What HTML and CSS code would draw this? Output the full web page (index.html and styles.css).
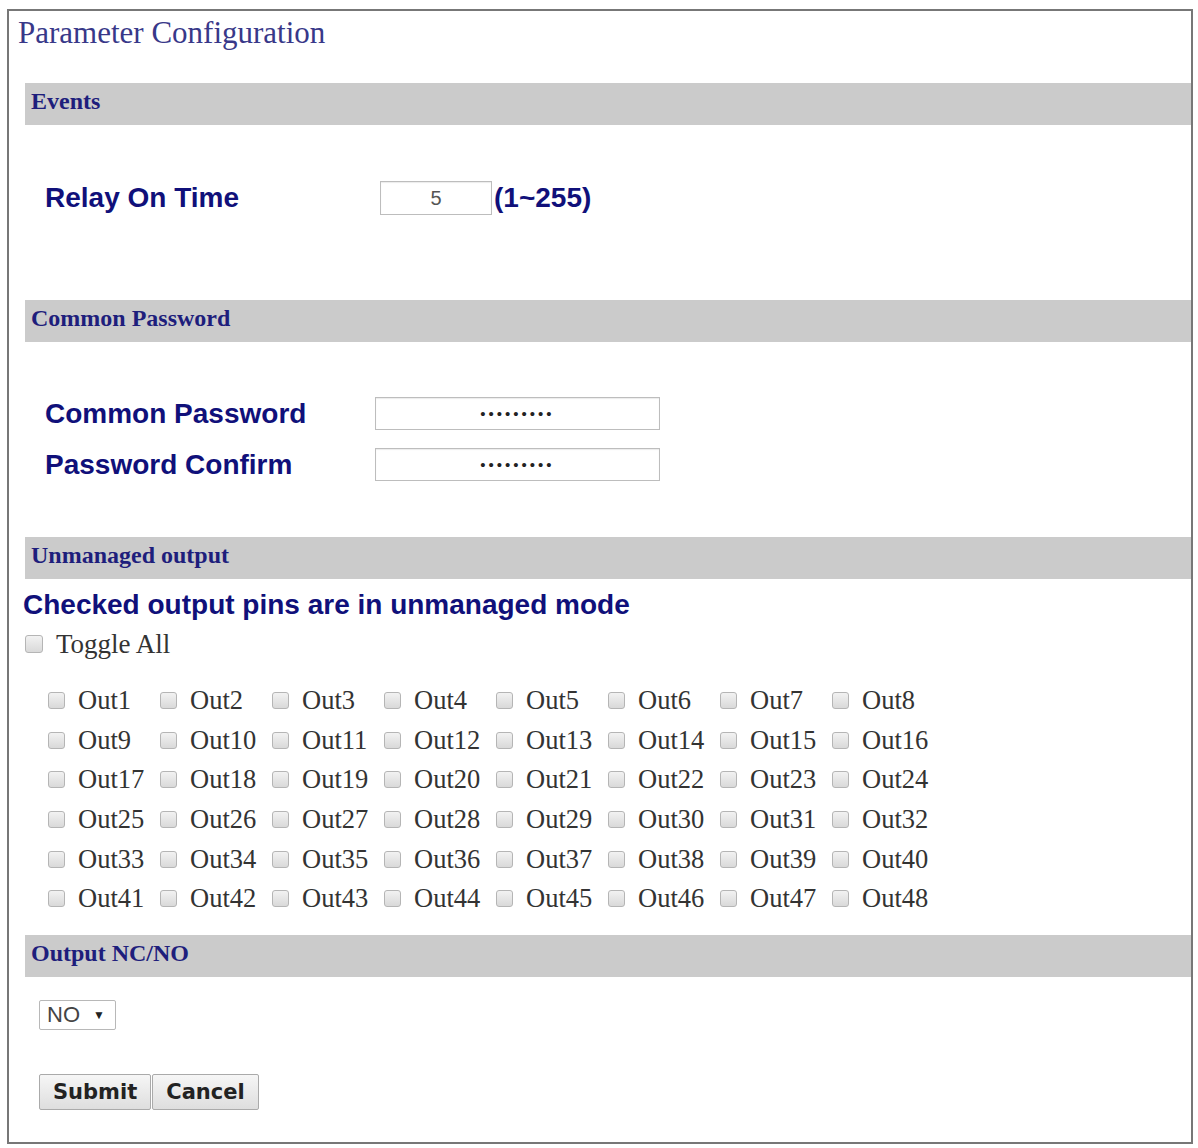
FILE: index.html
```html
<!DOCTYPE html>
<html lang="en">
<head>
  <meta charset="UTF-8" />
  <title>Parameter Configuration</title>
  <link rel="stylesheet" href="styles.css">
</head>
<body>
  <div class="page">
    <h1 class="title">Parameter Configuration</h1>

    <div class="bar">Events</div>
    <div class="section relay">
      <div class="row">
        <label class="label relay-label" for="relayTime">Relay On Time</label>
        <input class="field small" type="text" id="relayTime" value="5" />
        <span class="range">(1~255)</span>
      </div>
    </div>

    <div class="bar">Common Password</div>
    <div class="section passwords">
      <div class="row">
        <label class="label" for="pwd">Common Password</label>
        <input class="field wide" type="password" id="pwd" value="123456789" />
      </div>
      <div class="row">
        <label class="label" for="pwd2">Password Confirm</label>
        <input class="field wide" type="password" id="pwd2" value="123456789" />
      </div>
    </div>

    <div class="bar">Unmanaged output</div>
    <div class="section unmanaged">
      <p class="note">Checked output pins are in unmanaged mode</p>
      <label class="toggle"><input type="checkbox" class="box" /> Toggle All</label>
      <div class="outs">
        <label><input type="checkbox" class="box" />Out1</label>
        <label><input type="checkbox" class="box" />Out2</label>
        <label><input type="checkbox" class="box" />Out3</label>
        <label><input type="checkbox" class="box" />Out4</label>
        <label><input type="checkbox" class="box" />Out5</label>
        <label><input type="checkbox" class="box" />Out6</label>
        <label><input type="checkbox" class="box" />Out7</label>
        <label><input type="checkbox" class="box" />Out8</label>
        <label><input type="checkbox" class="box" />Out9</label>
        <label><input type="checkbox" class="box" />Out10</label>
        <label><input type="checkbox" class="box" />Out11</label>
        <label><input type="checkbox" class="box" />Out12</label>
        <label><input type="checkbox" class="box" />Out13</label>
        <label><input type="checkbox" class="box" />Out14</label>
        <label><input type="checkbox" class="box" />Out15</label>
        <label><input type="checkbox" class="box" />Out16</label>
        <label><input type="checkbox" class="box" />Out17</label>
        <label><input type="checkbox" class="box" />Out18</label>
        <label><input type="checkbox" class="box" />Out19</label>
        <label><input type="checkbox" class="box" />Out20</label>
        <label><input type="checkbox" class="box" />Out21</label>
        <label><input type="checkbox" class="box" />Out22</label>
        <label><input type="checkbox" class="box" />Out23</label>
        <label><input type="checkbox" class="box" />Out24</label>
        <label><input type="checkbox" class="box" />Out25</label>
        <label><input type="checkbox" class="box" />Out26</label>
        <label><input type="checkbox" class="box" />Out27</label>
        <label><input type="checkbox" class="box" />Out28</label>
        <label><input type="checkbox" class="box" />Out29</label>
        <label><input type="checkbox" class="box" />Out30</label>
        <label><input type="checkbox" class="box" />Out31</label>
        <label><input type="checkbox" class="box" />Out32</label>
        <label><input type="checkbox" class="box" />Out33</label>
        <label><input type="checkbox" class="box" />Out34</label>
        <label><input type="checkbox" class="box" />Out35</label>
        <label><input type="checkbox" class="box" />Out36</label>
        <label><input type="checkbox" class="box" />Out37</label>
        <label><input type="checkbox" class="box" />Out38</label>
        <label><input type="checkbox" class="box" />Out39</label>
        <label><input type="checkbox" class="box" />Out40</label>
        <label><input type="checkbox" class="box" />Out41</label>
        <label><input type="checkbox" class="box" />Out42</label>
        <label><input type="checkbox" class="box" />Out43</label>
        <label><input type="checkbox" class="box" />Out44</label>
        <label><input type="checkbox" class="box" />Out45</label>
        <label><input type="checkbox" class="box" />Out46</label>
        <label><input type="checkbox" class="box" />Out47</label>
        <label><input type="checkbox" class="box" />Out48</label>
      </div>
    </div>

    <div class="bar">Output NC/NO</div>
    <div class="section nc">
      <div class="select-wrap">
        <select id="ncno">
          <option value="nc">NC</option>
          <option value="no" selected>NO</option>
        </select>
      </div>
      <div class="buttons">
        <button type="submit">Submit</button><button type="button">Cancel</button>
      </div>
    </div>
  </div>
</body>
</html>
```

FILE: styles.css
```css
body {
  margin: 0;
  background: #fff;
  font-family: "Liberation Serif", "Times New Roman", serif;
}
.page {
  width: 1182px;
  margin: 9px 0 0 7px;
  border: 2px solid #777;
  padding: 0 0 32px;
}
.title {
  margin: 4px 0 0 9px;
  font-size: 31px;
  line-height: 36px;
  font-weight: normal;
  color: #383889;
}
.bar {
  margin-left: 16px;
  height: 42px;
  box-sizing: border-box;
  padding: 3px 6px 0;
  line-height: 30px;
  background: #cbcbcb;
  color: #1e1e7c;
  font-size: 24px;
  font-weight: bold;
}
.bar:first-of-type {
  margin-top: 32px;
}
.section {
  padding-left: 36px;
}
.row {
  display: flex;
  align-items: center;
}
.label {
  font-family: "Liberation Sans", Arial, sans-serif;
  font-weight: bold;
  font-size: 28px;
  color: #10107a;
  width: 330px;
}
.relay-label {
  width: 335px;
}
.field {
  box-sizing: border-box;
  border: 1px solid #bdbdbd;
  box-shadow: inset 0 1px 1px rgba(0, 0, 0, 0.08);
  background: #fff;
  text-align: center;
  font-family: "Liberation Sans", Arial, sans-serif;
  outline: none;
}
.small {
  width: 112px;
  height: 34px;
  font-size: 20px;
  color: #555;
}
.range {
  margin-left: 2px;
  font-family: "Liberation Sans", Arial, sans-serif;
  font-weight: bold;
  font-size: 28px;
  color: #10107a;
}
.relay {
  padding-top: 56px;
  padding-bottom: 85px;
}
.passwords {
  padding-top: 55px;
  padding-bottom: 56px;
  display: flex;
  flex-direction: column;
  gap: 18px;
}
.wide {
  width: 285px;
  height: 33px;
  font-size: 15px;
  letter-spacing: 3px;
  color: #222;
}
.unmanaged {
  padding-left: 14px;
}
.note {
  margin: 10px 0 0;
  font-family: "Liberation Sans", Arial, sans-serif;
  font-weight: bold;
  font-size: 28px;
  line-height: 32px;
  color: #10107a;
}
.box {
  appearance: none;
  -webkit-appearance: none;
  box-sizing: border-box;
  width: 17px;
  height: 17px;
  margin: 0;
  border: 1px solid #b5b5b5;
  border-radius: 3px;
  background: linear-gradient(#f2f2f2, #d9d9d9);
}
.toggle {
  display: flex;
  align-items: center;
  gap: 13px;
  margin: 5px 0 0 2px;
  height: 36px;
  font-size: 27px;
  color: #333;
}
.toggle .box {
  width: 18px;
  height: 18px;
}
.outs {
  display: grid;
  grid-template-columns: repeat(8, 112px);
  grid-auto-rows: 39.6px;
  margin: 19px 0 16px 25px;
}
.outs label {
  display: flex;
  align-items: center;
  gap: 13px;
  font-size: 26.5px;
  color: #333;
}
.nc {
  padding-left: 30px;
  padding-top: 23px;
}
.select-wrap {
  position: relative;
  display: inline-block;
}
.select-wrap select {
  appearance: none;
  -webkit-appearance: none;
  width: 77px;
  height: 30px;
  box-sizing: border-box;
  border: 1px solid #b8b8b8;
  border-radius: 2px;
  background: #fff;
  padding: 0 0 0 7px;
  font-family: "Liberation Sans", Arial, sans-serif;
  font-size: 22px;
  color: #444;
}
.select-wrap::after {
  content: "\25BC";
  position: absolute;
  right: 11px;
  top: 8px;
  font-size: 12px;
  color: #222;
  pointer-events: none;
}
.buttons {
  display: flex;
  margin-top: 44px;
}
.buttons button {
  height: 36px;
  box-sizing: border-box;
  border: 1px solid #aaa;
  border-radius: 2px;
  background: linear-gradient(#f6f6f6, #dedede);
  font-family: "DejaVu Sans", Verdana, sans-serif;
  font-weight: bold;
  font-size: 21px;
  color: #222;
  padding: 0 13px;
}
.buttons button + button {
  margin-left: 1px;
}
```
